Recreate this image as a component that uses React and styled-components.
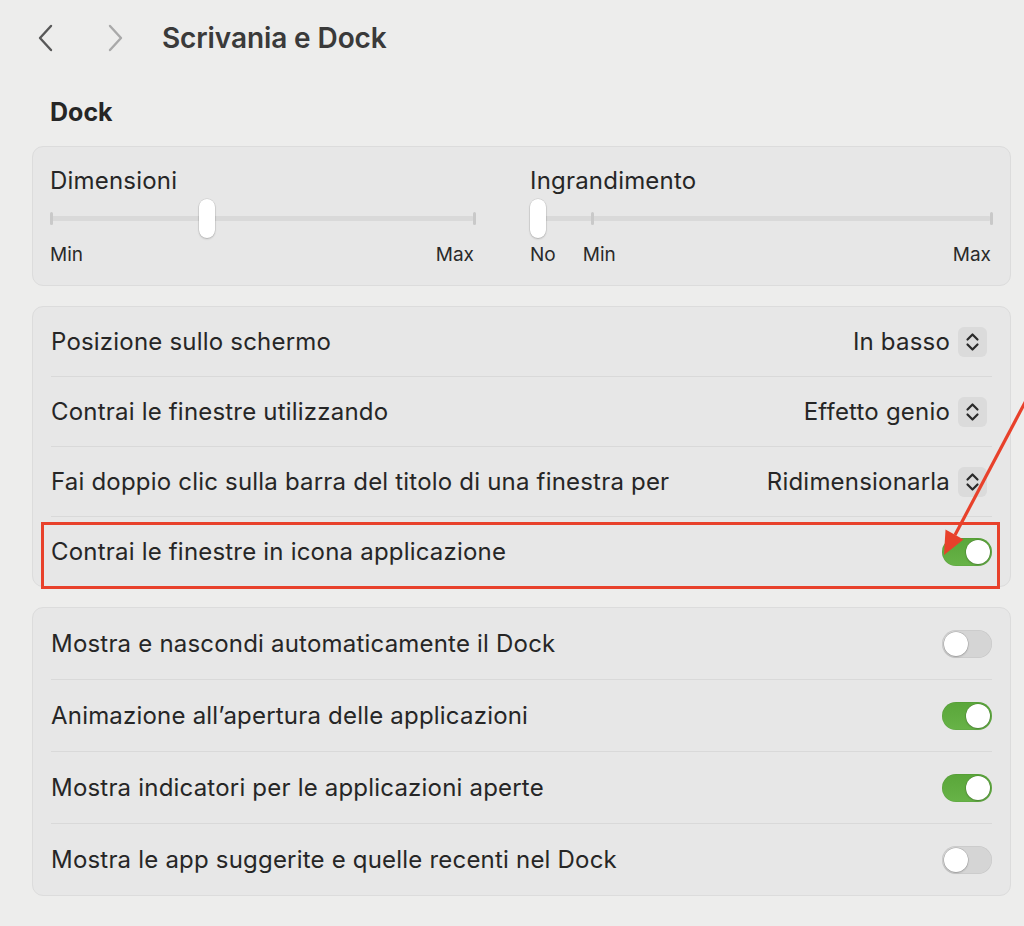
import React from 'react';
import styled, { createGlobalStyle } from 'styled-components';

const GlobalStyle = createGlobalStyle`
  body {
    margin: 0;
    background: #ededec;
    font-family: Inter, 'Liberation Sans', sans-serif;
    color: #262626;
  }
`;

const Page = styled.div`
  position: relative;
  width: 1024px;
  height: 926px;
  overflow: hidden;
`;

const Header = styled.div`
  display: flex;
  align-items: center;
  height: 76px;
  padding-left: 37px;
`;

const NavButton = styled.div`
  display: flex;
  width: 17px;
  height: 28px;
  margin-right: ${({ gap }) => gap}px;
  color: ${({ disabled }) => (disabled ? '#a9a9a9' : '#585858')};
`;

const Title = styled.h1`
  margin: 0;
  font-size: 28px;
  font-weight: 600;
  color: #3a3a3a;
  letter-spacing: -0.1px;
`;

const SectionTitle = styled.h2`
  margin: 19px 0 17px 50px;
  height: 34px;
  line-height: 34px;
  font-size: 25px;
  font-weight: 700;
  color: #262626;
`;

const Card = styled.div`
  margin: 0 13px 20px 32px;
  background: #e7e7e7;
  border: 1px solid #dcdcdc;
  border-radius: 11px;
`;

const SliderCard = styled(Card)`
  display: grid;
  grid-template-columns: 424px 1fr;
  column-gap: 56px;
  padding: 19px 19px 18px 17px;
`;

const SliderBlock = styled.div`
  display: flex;
  flex-direction: column;
`;

const SliderLabel = styled.div`
  height: 30px;
  line-height: 30px;
  font-size: 24px;
  letter-spacing: 0.2px;
`;

const TrackArea = styled.div`
  position: relative;
  height: 39px;
  margin-top: 3px;
`;

const Track = styled.div`
  position: absolute;
  left: 0;
  right: 0;
  top: 17px;
  height: 5px;
  border-radius: 3px;
  background: #d9d9d9;
`;

const Tick = styled.div`
  position: absolute;
  top: 13px;
  width: 3px;
  height: 13px;
  border-radius: 2px;
  background: #c9c9c9;
  transform: translateX(-1px);
`;

const Thumb = styled.div`
  position: absolute;
  top: 0;
  width: 16px;
  height: 39px;
  border-radius: 8px;
  background: #fff;
  box-shadow: 0 0 0 0.5px rgba(0, 0, 0, 0.12), 0 1px 2px rgba(0, 0, 0, 0.2);
`;

const ScaleLabels = styled.div`
  display: flex;
  height: 24px;
  margin-top: 5px;
  line-height: 24px;
  font-size: 19px;
  color: #2a2a2a;
`;

const ScaleLabel = styled.span`
  margin-left: ${({ offset }) => offset || 0}px;
  &:last-child {
    margin-left: auto;
  }
`;

const Row = styled.div`
  position: relative;
  display: flex;
  align-items: center;
  justify-content: space-between;
  height: ${({ h }) => h}px;
  margin: 0 18px;
  font-size: 24px;
  letter-spacing: 0.2px;
  color: #262626;
  & + & {
    border-top: 1px solid #d9d9d9;
  }
`;

const Popup = styled.div`
  display: flex;
  align-items: center;
  gap: 8px;
  margin-right: 5px;
`;

const Stepper = styled.div`
  display: flex;
  width: 29px;
  height: 30px;
  border-radius: 6px;
  background: #dbdbdb;
`;

const SwitchTrack = styled.div`
  position: relative;
  width: 50px;
  height: 28px;
  border-radius: 14px;
  background: ${({ on }) => (on ? 'linear-gradient(#5aa63a, #67b347)' : '#d5d5d5')};
  box-shadow: inset 0 0 0 0.5px rgba(0, 0, 0, 0.08);
`;

const Knob = styled.div`
  position: absolute;
  top: 2px;
  left: ${({ on }) => (on ? '24px' : '2px')};
  width: 24px;
  height: 24px;
  border-radius: 50%;
  background: #fff;
  box-shadow: 0 0 0 0.5px rgba(0, 0, 0, 0.18), 0 1px 2px rgba(0, 0, 0, 0.22);
`;

const Highlight = styled.div`
  position: absolute;
  top: 5px;
  left: -10px;
  right: -8px;
  bottom: -3px;
  border: 3px solid #e8412b;
  pointer-events: none;
`;

const Annotation = styled.svg`
  position: absolute;
  top: 0;
  left: 0;
  pointer-events: none;
`;

function Chevron({ dir }) {
  const d = dir === 'left' ? 'M14 2 L3 14 L14 26' : 'M3 2 L14 14 L3 26';
  return (
    <svg width="17" height="28" viewBox="0 0 17 28">
      <path d={d} fill="none" stroke="currentColor" strokeWidth="2.4" strokeLinecap="round" strokeLinejoin="round" />
    </svg>
  );
}

function Slider({ label, pos, ticks, labels }) {
  return (
    <SliderBlock>
      <SliderLabel>{label}</SliderLabel>
      <TrackArea>
        <Track />
        {ticks.map((t, i) => (
          <Tick key={i} style={{ left: t }} />
        ))}
        <Thumb style={{ left: `calc((100% - 16px) * ${pos})` }} />
      </TrackArea>
      <ScaleLabels>
        {labels.map(([text, offset]) => (
          <ScaleLabel key={text} offset={offset}>
            {text}
          </ScaleLabel>
        ))}
      </ScaleLabels>
    </SliderBlock>
  );
}

function PopupButton({ value }) {
  return (
    <Popup>
      <span>{value}</span>
      <Stepper>
        <svg width="29" height="30" viewBox="0 0 29 30">
          <path d="M9.5 12.5 L14.5 7.5 L19.5 12.5 M9.5 17.5 L14.5 22.5 L19.5 17.5" fill="none" stroke="#2a2a2a" strokeWidth="2.2" strokeLinecap="round" strokeLinejoin="round" />
        </svg>
      </Stepper>
    </Popup>
  );
}

function Switch({ on }) {
  return (
    <SwitchTrack on={on}>
      <Knob on={on} />
    </SwitchTrack>
  );
}

const popupRows = [
  ['Posizione sullo schermo', 'In basso'],
  ['Contrai le finestre utilizzando', 'Effetto genio'],
  ['Fai doppio clic sulla barra del titolo di una finestra per', 'Ridimensionarla'],
];

const toggleRows = [
  ['Mostra e nascondi automaticamente il Dock', false],
  ['Animazione all’apertura delle applicazioni', true],
  ['Mostra indicatori per le applicazioni aperte', true],
  ['Mostra le app suggerite e quelle recenti nel Dock', false],
];

export default function App() {
  return (
    <Page>
      <GlobalStyle />
      <Header>
        <NavButton gap={53}>
          <Chevron dir="left" />
        </NavButton>
        <NavButton gap={38} disabled>
          <Chevron dir="right" />
        </NavButton>
        <Title>Scrivania e Dock</Title>
      </Header>

      <SectionTitle>Dock</SectionTitle>

      <SliderCard>
        <Slider
          label="Dimensioni"
          pos={0.366}
          ticks={[1, '100%']}
          labels={[['Min'], ['Max']]}
        />
        <Slider
          label="Ingrandimento"
          pos={0}
          ticks={[62, '100%']}
          labels={[['No'], ['Min', 27], ['Max']]}
        />
      </SliderCard>

      <Card>
        {popupRows.map(([label, value]) => (
          <Row key={label} h={69}>
            <span>{label}</span>
            <PopupButton value={value} />
          </Row>
        ))}
        <Row h={69}>
          <span>Contrai le finestre in icona applicazione</span>
          <Switch on />
          <Highlight />
        </Row>
      </Card>

      <Card>
        {toggleRows.map(([label, on]) => (
          <Row key={label} h={71}>
            <span>{label}</span>
            <Switch on={on} />
          </Row>
        ))}
      </Card>

      <Annotation width="1024" height="926" viewBox="0 0 1024 926">
        <line x1="1030" y1="393" x2="955" y2="535" stroke="#e8412b" strokeWidth="3.2" />
        <polygon points="944,555 963.5,539.5 945.5,529.5" fill="#e8412b" />
      </Annotation>
    </Page>
  );
}
